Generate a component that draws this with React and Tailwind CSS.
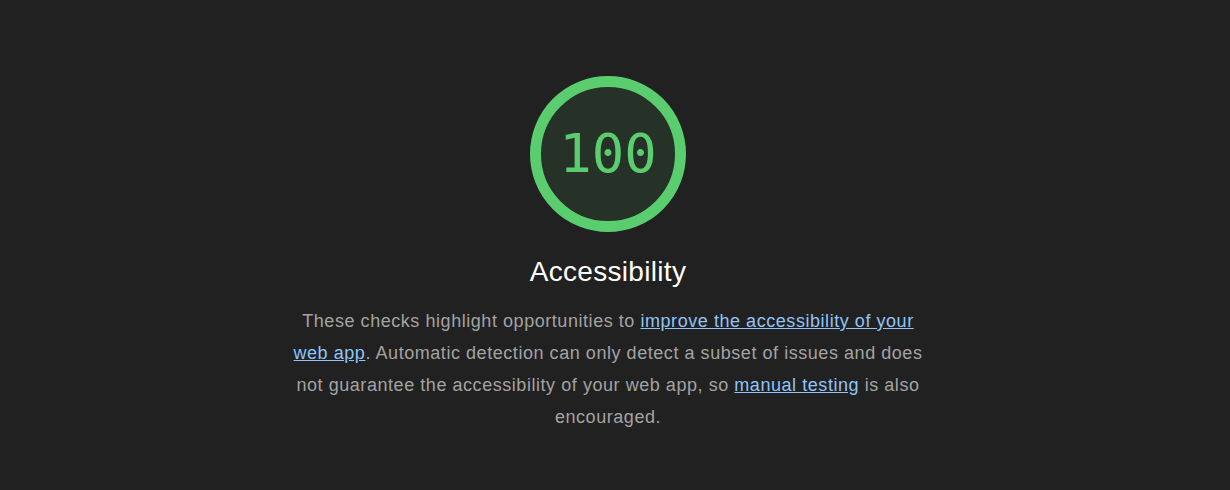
export default function App() {
  return (
    <div className="min-h-[490px] w-full bg-[#212121] pr-[14px] pt-[76px]" style={{ fontFamily: '"Liberation Sans", Arial, sans-serif' }}>
      <div className="flex flex-col items-center">
        <div className="relative h-[156px] w-[156px]">
          <svg viewBox="0 0 156 156" className="absolute inset-0 h-full w-full">
            <circle cx="78" cy="78" r="72.5" fill="#263128" stroke="#5acd6e" strokeWidth="11" />
          </svg>
          <div className="absolute inset-0 flex items-center justify-center">
            <span className="text-[54px] leading-none text-[#5acd6e]" style={{ fontFamily: '"DejaVu Sans Mono", monospace' }}>
              100
            </span>
          </div>
        </div>
        <h2 className="mt-[22px] text-[28px] leading-[36px] tracking-[0.3px] text-white">Accessibility</h2>
        <p className="mt-[15px] w-[640px] text-center text-[18px] leading-[32px] tracking-[0.55px] text-[#a3a3a3]">
          These checks highlight opportunities to{" "}
          <a href="#" className="text-[#90c4f8] underline">improve the accessibility of your web app</a>. Automatic
          detection can only detect a subset of issues and does not guarantee the accessibility of your web app, so{" "}
          <a href="#" className="text-[#90c4f8] underline">manual testing</a> is also encouraged.
        </p>
      </div>
    </div>
  );
}
